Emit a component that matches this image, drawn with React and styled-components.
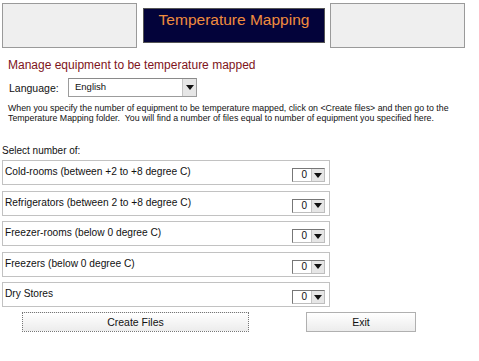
import React from "react";
import styled, { createGlobalStyle } from "styled-components";

const GlobalStyle = createGlobalStyle`
  html, body {
    margin: 0;
    padding: 0;
    background: #ffffff;
  }
  body {
    font-family: "Liberation Sans", Arial, sans-serif;
    color: #111;
  }
`;

const Page = styled.div`
  width: 479px;
  height: 361px;
  overflow: hidden;
  padding: 3px 0 0 2px;
  box-sizing: border-box;
`;

const Header = styled.div`
  display: flex;
  align-items: flex-start;
`;

const SideBox = styled.div`
  width: 133px;
  height: 43px;
  background: #efefef;
  border: 1px solid #9a9a9a;
  margin-left: ${(p) => p.$ml || 0}px;
`;

const TitleBox = styled.div`
  width: 182px;
  height: 35px;
  margin: 5px 0 0 6px;
  background: #03033a;
  border: 1px solid #555;
  box-sizing: border-box;
  color: #f08c3e;
  font-size: 15.5px;
  text-align: center;
  padding-top: 2px;
`;

const Heading = styled.h1`
  margin: 10px 0 0 6px;
  font-size: 12px;
  font-weight: normal;
  color: #7e1420;
  line-height: 14px;
`;

const LangRow = styled.div`
  display: flex;
  align-items: center;
  margin: 6px 0 0 7px;
`;

const LangLabel = styled.span`
  font-size: 10.5px;
  width: 59px;
`;

const LangSelect = styled.div`
  width: 129px;
  height: 19px;
  box-sizing: border-box;
  border: 1px solid #9c9c9c;
  border-top-color: #8a8a8a;
  display: flex;
  background: #fff;
`;

const LangValue = styled.div`
  flex: 1;
  font-size: 9.5px;
  padding: 2px 0 0 6px;
`;

const DropButton = styled.div`
  width: ${(p) => p.$w}px;
  background: #e6e6e6;
  border-left: 1px solid #c4c4c4;
  display: flex;
  align-items: center;
  justify-content: center;
`;

const Arrow = styled.div`
  width: 0;
  height: 0;
  border-left: 4px solid transparent;
  border-right: 4px solid transparent;
  border-top: 5px solid #111;
`;

const Note = styled.p`
  margin: 6px 0 0 6px;
  font-size: 8.8px;
  line-height: 10px;
  color: #111;
`;

const SelectLabel = styled.div`
  margin: 22px 0 0 0;
  font-size: 10px;
  line-height: 12px;
`;

const List = styled.div`
  display: flex;
  flex-direction: column;
  gap: 5.5px;
  margin-top: 3px;
  width: 328px;
`;

const Row = styled.div`
  height: 25px;
  box-sizing: border-box;
  border: 1px solid #c2c2c2;
  display: flex;
  align-items: center;
  justify-content: space-between;
  padding: 0 4px 0 2px;
  font-size: 10.2px;
`;

const RowText = styled.span`
  margin-top: -2px;
`;

const Combo = styled.div`
  width: 33px;
  height: 14px;
  box-sizing: border-box;
  display: flex;
  margin-top: 5px;
  border: 1px solid #bdbdbd;
  border-top: 1px solid #777;
  border-left: 1px solid #777;
  background: #fff;
`;

const ComboValue = styled.div`
  flex: 1;
  font-size: 10px;
  line-height: 12px;
  text-align: right;
  padding-right: 4px;
`;

const Buttons = styled.div`
  display: flex;
  align-items: center;
  margin: 5px 0 0 20px;
`;

const Button = styled.button`
  width: ${(p) => p.$w}px;
  height: 20px;
  box-sizing: border-box;
  margin-left: ${(p) => p.$ml || 0}px;
  font-family: "Liberation Sans", Arial, sans-serif;
  font-size: 10.5px;
  color: #111;
  background: linear-gradient(#ffffff, #ececec);
  border: 1px ${(p) => (p.$focus ? "dotted #777" : "solid #b0b0b0")};
  padding: 0;
`;

const equipment = [
  "Cold-rooms (between +2 to +8 degree C)",
  "Refrigerators (between 2 to +8 degree C)",
  "Freezer-rooms (below 0 degree C)",
  "Freezers (below 0 degree C)",
  "Dry Stores",
];

export default function App() {
  return (
    <Page>
      <GlobalStyle />
      <Header>
        <SideBox />
        <TitleBox>Temperature Mapping</TitleBox>
        <SideBox $ml={5} />
      </Header>
      <Heading>Manage equipment to be temperature mapped</Heading>
      <LangRow>
        <LangLabel>Language:</LangLabel>
        <LangSelect>
          <LangValue>English</LangValue>
          <DropButton $w={13}>
            <Arrow />
          </DropButton>
        </LangSelect>
      </LangRow>
      <Note>
        When you specify the number of equipment to be temperature mapped, click on &lt;Create files&gt; and then go to the
        <br />
        Temperature Mapping folder.&nbsp; You will find a number of files equal to number of equipment you specified here.
      </Note>
      <SelectLabel>Select number of:</SelectLabel>
      <List>
        {equipment.map((name) => (
          <Row key={name}>
            <RowText>{name}</RowText>
            <Combo>
              <ComboValue>0</ComboValue>
              <DropButton $w={12}>
                <Arrow />
              </DropButton>
            </Combo>
          </Row>
        ))}
      </List>
      <Buttons>
        <Button $w={227} $focus>Create Files</Button>
        <Button $w={110} $ml={57}>Exit</Button>
      </Buttons>
    </Page>
  );
}
